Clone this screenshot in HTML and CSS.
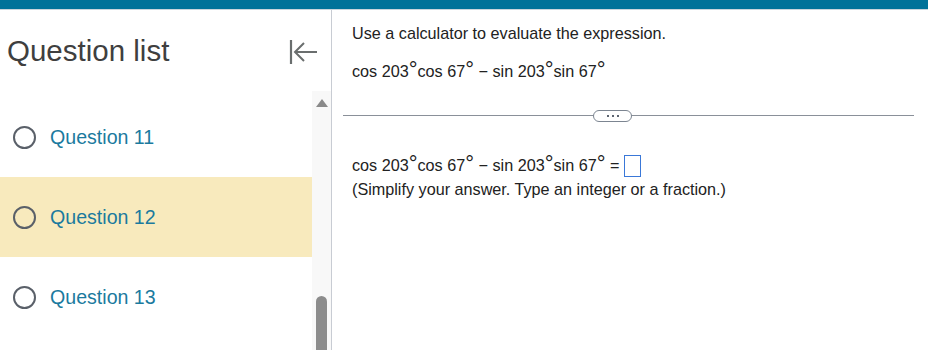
FILE: index.html
```html
<!DOCTYPE html>
<html lang="en">
<head>
<meta charset="UTF-8" />
<title>Question</title>
<link rel="stylesheet" href="styles.css">
</head>
<body>
  <div class="topbar"></div>
  <div class="layout">
    <aside class="sidebar">
      <div class="side-head">
        <h2>Question list</h2>
        <svg class="collapse" width="30" height="26" viewBox="0 0 30 26">
          <path d="M2 1 V25" stroke="#6a6e6e" stroke-width="2.2" fill="none"/>
          <path d="M28 13 H6 M15 4 L6 13 L15 22" stroke="#6a6e6e" stroke-width="2" fill="none"/>
        </svg>
      </div>
      <div class="side-body">
        <ul class="qlist">
          <li class="qitem"><span class="radio"></span><span class="qname">Question 11</span></li>
          <li class="qitem current"><span class="radio"></span><span class="qname">Question 12</span></li>
          <li class="qitem"><span class="radio"></span><span class="qname">Question 13</span></li>
        </ul>
        <div class="scrollbar">
          <span class="arrow-up"></span>
          <span class="thumb"></span>
        </div>
      </div>
    </aside>
    <main class="content">
      <p class="prompt">Use a calculator to evaluate the expression.</p>
      <p class="expr">cos 203<sup>°</sup>cos 67<sup>°</sup> − sin 203<sup>°</sup>sin 67<sup>°</sup></p>
      <div class="divider"><button class="more"><i></i><i></i><i></i></button></div>
      <p class="expr answer">cos 203<sup>°</sup>cos 67<sup>°</sup> − sin 203<sup>°</sup>sin 67<sup>°</sup> =<span class="box"></span></p>
      <p class="hint">(Simplify your answer. Type an integer or a fraction.)</p>
    </main>
  </div>
</body>
</html>
```

FILE: styles.css
```css
* {
  box-sizing: border-box;
}
body {
  margin: 0;
  font-family: 'Liberation Sans', Arial, sans-serif;
  background: #fff;
  height: 350px;
  overflow: hidden;
}
.topbar {
  height: 10px;
  background: #007299;
  border-bottom: 1px solid #c9d4dc;
}
.layout {
  display: flex;
  height: 340px;
}
.sidebar {
  width: 332px;
  border-right: 1px solid #c8ccd3;
  display: flex;
  flex-direction: column;
}
.side-head {
  display: flex;
  align-items: center;
  justify-content: space-between;
  height: 81px;
  padding: 0 12px 0 7px;
}
.side-head h2 {
  margin: 0;
  font-size: 29.5px;
  font-weight: 400;
  color: #3f3f3f;
}
.collapse {
  margin-top: 2px;
}
.side-body {
  flex: 1;
  display: flex;
}
.qlist {
  list-style: none;
  margin: 0;
  padding: 6px 0 0;
  width: 312px;
}
.qitem {
  display: flex;
  align-items: center;
  height: 80px;
  padding-left: 13px;
}
.qitem.current {
  background: #f8eabd;
}
.radio {
  width: 23px;
  height: 23px;
  border: 2.5px solid #5a6069;
  border-radius: 50%;
  margin-right: 14px;
}
.qname {
  font-size: 19.6px;
  color: #1b7a9e;
}
.scrollbar {
  width: 19px;
  background: #f8f8f8;
  position: relative;
}
.arrow-up {
  position: absolute;
  left: 4px;
  top: 8px;
  border-left: 6px solid transparent;
  border-right: 6px solid transparent;
  border-bottom: 8px solid #8a8a8a;
}
.thumb {
  position: absolute;
  left: 4px;
  bottom: 0;
  width: 11px;
  height: 54px;
  background: #8c8c8c;
  border-radius: 6px 6px 0 0;
}
.content {
  flex: 1;
  padding: 13.5px 14px 0 11px;
  color: #222;
}
.content p {
  font-size: 16.2px;
  line-height: 19px;
  margin-left: 9px;
  margin-right: 0;
}
.prompt {
  margin-top: 0;
  margin-bottom: 0;
}
.expr {
  margin-top: 19px;
  margin-bottom: 0;
}
.expr sup {
  font-size: 22px;
  line-height: 0;
  vertical-align: 0;
}
.divider {
  margin-top: 34.5px;
  height: 1px;
  background: #8a9099;
  display: flex;
  align-items: center;
}
.more {
  margin-left: 250px;
  width: 39px;
  height: 12px;
  border: 1.5px solid #7c8591;
  border-radius: 7px;
  background: #fff;
  padding: 0;
  display: flex;
  justify-content: center;
  align-items: center;
  gap: 3px;
}
.more i {
  width: 2px;
  height: 2px;
  background: #5c6470;
}
.answer {
  margin-top: 39.5px;
}
.box {
  display: inline-block;
  width: 17px;
  height: 22px;
  margin: -4px 0 -4px 5px;
  border: 1px solid #3a78d8;
  vertical-align: middle;
}
.hint {
  margin-top: 5px;
  margin-bottom: 0;
}
```
